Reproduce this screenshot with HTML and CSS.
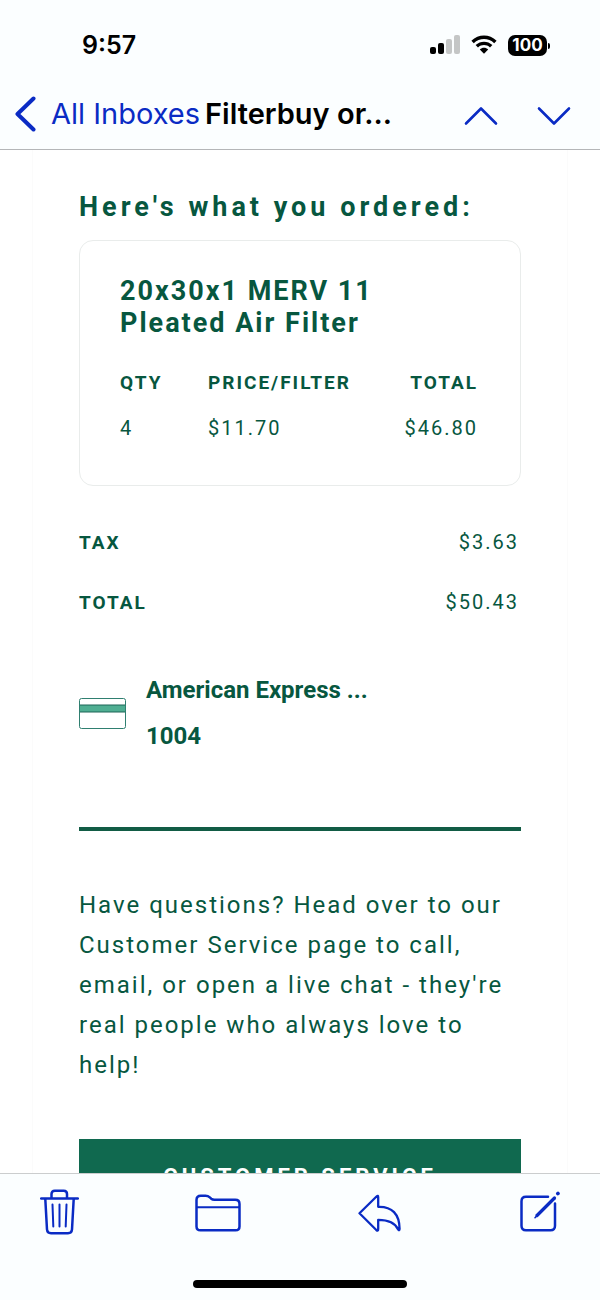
FILE: index.html
```html
<!DOCTYPE html>
<html lang="en">
  <head>
    <meta charset="UTF-8" />
    <meta name="viewport" content="width=device-width, initial-scale=1.0" />
    <title>Filterbuy order</title>
    <link rel="stylesheet" href="styles.css">
  </head>
  <body>
    <header class="top">
      <div class="status">
        <span class="time">9:57</span>
        <div class="status-icons">
          <svg width="30" height="20" viewBox="0 0 30 20">
            <rect x="0" y="12" width="6" height="7" rx="2" />
            <rect x="8" y="8" width="6" height="11" rx="2" />
            <rect class="weak" x="16" y="4" width="6" height="15" rx="2" />
            <rect class="weak" x="24" y="0" width="6" height="19" rx="2" />
          </svg>
          <svg width="26" height="20" viewBox="0 0 26 20">
            <path d="M0.4 5.8 C7.5 -1.4 18.5 -1.4 25.6 5.8 L23.2 8.2 C17.5 2.7 8.5 2.7 2.8 8.2 Z" />
            <path d="M4.6 10.1 C9.4 5.5 16.6 5.5 21.4 10.1 L19 12.5 C15.5 9.3 10.5 9.3 7 12.5 Z" />
            <path d="M8.8 14.4 C11.2 12.2 14.8 12.2 17.2 14.4 L13 18.8 Z" />
          </svg>
          <span class="battery">100</span>
        </div>
      </div>
      <nav class="nav">
        <a class="back" href="#">
          <svg width="21" height="36" viewBox="0 0 21 36">
            <path d="M18.5 2.5 L2.5 18 L18.5 33.5" stroke-width="4" />
          </svg>
          All Inboxes
        </a>
        <h1 class="subject">Filterbuy or...</h1>
        <div class="arrows">
          <button type="button" aria-label="Previous message">
            <svg width="34" height="20" viewBox="0 0 34 20">
              <path d="M2 17.5 L17 2.5 L32 17.5" stroke-width="2.6" />
            </svg>
          </button>
          <button type="button" aria-label="Next message">
            <svg width="34" height="20" viewBox="0 0 34 20">
              <path d="M2 2.5 L17 17.5 L32 2.5" stroke-width="2.6" />
            </svg>
          </button>
        </div>
      </nav>
    </header>

    <main class="mail">
      <div class="letter">
        <h2 class="heading">Here's what you ordered:</h2>

        <section class="item">
          <h3 class="item-name">20x30x1 MERV 11 Pleated Air Filter</h3>
          <table class="prices">
            <thead>
              <tr>
                <th class="qty">QTY</th>
                <th>PRICE/FILTER</th>
                <th class="amount">TOTAL</th>
              </tr>
            </thead>
            <tbody>
              <tr>
                <td class="qty">4</td>
                <td>$11.70</td>
                <td class="amount">$46.80</td>
              </tr>
            </tbody>
          </table>
        </section>

        <table class="totals">
          <tr>
            <th>TAX</th>
            <td class="amount">$3.63</td>
          </tr>
          <tr>
            <th>TOTAL</th>
            <td class="amount">$50.43</td>
          </tr>
        </table>

        <div class="payment">
          <svg width="47" height="31" viewBox="0 0 47 31">
            <rect x="0.5" y="0.5" width="46" height="30" rx="2" fill="#fff" stroke="#2f7f70" />
            <rect x="1" y="7" width="45" height="7" fill="#4fae92" />
            <path d="M1 7 H46 M1 14 H46" stroke="#1c6557" />
          </svg>
          <p class="card-name">American Express ... 1004</p>
        </div>

        <hr class="rule" />

        <p class="help">Have questions? Head over to our Customer Service page to call, email, or open a live chat - they're real people who always love to help!</p>

        <a class="service" href="#">CUSTOMER SERVICE</a>
      </div>
    </main>

    <footer class="bottom">
      <div class="toolbar">
        <button type="button" aria-label="Delete">
          <svg width="39" height="46" viewBox="0 0 39 46">
            <path d="M1.2 9.5 H37.8 M11.5 9 V5 Q11.5 1.7 14.8 1.7 H23.7 Q27 1.7 27 5 V9 M5.3 10 L7 40.5 Q7.3 44.2 11 44.2 H28 Q31.7 44.2 32 40.5 L33.7 10" />
            <path d="M12.5 15.5 L13.3 37.5 M19.5 15.5 V37.5 M26.5 15.5 L25.7 37.5" stroke-width="2" />
          </svg>
        </button>
        <button type="button" aria-label="Move">
          <svg width="46" height="46" viewBox="0 0 46 46">
            <path d="M1.5 37.5 V11 Q1.5 6.7 5.8 6.7 H10.5 Q13 6.7 14.8 8.4 L16.2 9.7 Q17.5 10.8 19.5 10.8 H40.2 Q44.5 10.8 44.5 15 V37.5 Q44.5 41.3 40.5 41.3 H5.5 Q1.5 41.3 1.5 37.5 Z" />
            <path d="M2 18.3 H44" stroke-width="2" />
          </svg>
        </button>
        <button type="button" aria-label="Reply">
          <svg width="46" height="46" viewBox="0 0 46 46">
            <path d="M1.5 24.3 L18.5 7.5 Q20.2 6 20.2 8.2 V17.8 C34 17.3 41.5 25 41.6 40 Q41.5 42.3 40 40.3 C37 33.5 31 30.8 20.2 30.8 V40 Q20.2 42.6 18.3 41 Z" stroke-width="2.3" />
          </svg>
        </button>
        <button type="button" aria-label="Compose">
          <svg width="40" height="46" viewBox="0 0 40 46">
            <path d="M28 7.8 H6 Q1.5 7.8 1.5 12.3 V36.8 Q1.5 41.3 6 41.3 H30.5 Q35 41.3 35 36.8 V14.5" />
            <path d="M17 26.5 L34.5 9" stroke-width="3.2" />
            <path d="M15 28.7 L17.5 26" stroke-width="1.6" />
            <path d="M37.8 4.6 L38 4.4" stroke-width="3.6" />
          </svg>
        </button>
      </div>
      <div class="home-bar"></div>
    </footer>
  </body>
</html>
```
FILE: styles.css
```css
* {
  box-sizing: border-box;
  margin: 0;
  padding: 0;
}

body {
  display: flex;
  flex-direction: column;
  height: 100vh;
  background-color: white;
  color: #07573f;
  font-family: Roboto, sans-serif;
}

svg {
  display: block;
  flex: none;
}

button {
  border: none;
  background: none;
}

/* status bar and navigation */
.top {
  flex: none;
  padding-top: 24px;
  background-color: #fbfeff;
  border-bottom: 1px solid #b4b6b8;
  color: black;
  font-family: Inter, sans-serif;
}

.status {
  display: flex;
  justify-content: space-between;
  align-items: center;
  height: 42px;
  padding: 0 53px 0 82px;
}

.time {
  font-size: 25px;
  font-weight: 600;
}

.status-icons {
  display: flex;
  align-items: center;
  gap: 11px;
}

.weak {
  fill: #c4c6c6;
}

.battery {
  position: relative;
  width: 39px;
  border-radius: 7px;
  background-color: black;
  color: white;
  font-size: 17px;
  font-weight: 700;
  line-height: 21px;
  text-align: center;
}

.battery::after {
  content: "";
  position: absolute;
  top: 8px;
  right: -3px;
  width: 2px;
  height: 6px;
  border-radius: 0 2px 2px 0;
  background-color: black;
}

.nav {
  display: flex;
  align-items: center;
  height: 83px;
  padding: 12px 29px 0 15px;
  font-size: 29px;
}

.back {
  display: flex;
  align-items: center;
  gap: 15px;
  color: #0a2bc4;
  text-decoration: none;
  white-space: nowrap;
}

.subject {
  margin-left: 5px;
  font-size: 29px;
  font-weight: 600;
  white-space: nowrap;
}

.arrows {
  display: flex;
  gap: 39px;
  margin-left: auto;
  padding-top: 4px;
}

.nav svg,
.toolbar svg {
  fill: none;
  stroke: #0a2bc4;
  stroke-width: 2.5;
  stroke-linecap: round;
  stroke-linejoin: round;
}

/* message */
.mail {
  flex: 1;
  min-height: 0;
  overflow: hidden;
}

.letter {
  margin: 0 32px;
  padding: 41px 46px;
  border: solid #fbfbfb;
  border-width: 0 1px;
}

.heading {
  margin-bottom: 17px;
  font-size: 27px;
  line-height: 32px;
  letter-spacing: 4px;
}

.item {
  margin-bottom: 26px;
  padding: 34px 40px;
  border: 1px solid #e9eceb;
  border-radius: 14px;
}

.item-name {
  max-width: 300px;
  margin-bottom: 20px;
  font-size: 27px;
  line-height: 32px;
  letter-spacing: 2px;
}

table {
  width: 100%;
  border-collapse: collapse;
  font-size: 19px;
  letter-spacing: 2px;
}

th {
  text-align: left;
}

td {
  font-size: 20px;
}

.prices tr {
  height: 46px;
}

.totals tr {
  height: 60px;
}

.qty {
  width: 88px;
}

.amount {
  padding-right: 2px;
  text-align: right;
}

.payment {
  display: flex;
  align-items: center;
  gap: 20px;
  margin: 35px 0 68px;
}

.card-name {
  max-width: 240px;
  font-size: 24px;
  font-weight: 700;
  line-height: 46px;
}

.rule {
  height: 4px;
  border: none;
  background-color: #125c45;
}

.help {
  margin: 54px 0;
  font-size: 24px;
  line-height: 40px;
  letter-spacing: 2px;
}

.service {
  display: block;
  background-color: #10694f;
  color: white;
  font-size: 22px;
  font-weight: 700;
  line-height: 76px;
  letter-spacing: 4px;
  text-align: center;
  text-decoration: none;
}

/* bottom toolbar */
.bottom {
  flex: none;
  padding: 15px 0 12px;
  background-color: #fbfeff;
  border-top: 1px solid #cbcdce;
}

.toolbar {
  display: flex;
  justify-content: space-between;
  padding: 0 40px;
}

.home-bar {
  width: 214px;
  height: 8px;
  margin: 45px auto 0;
  border-radius: 4px;
  background-color: black;
}
```
